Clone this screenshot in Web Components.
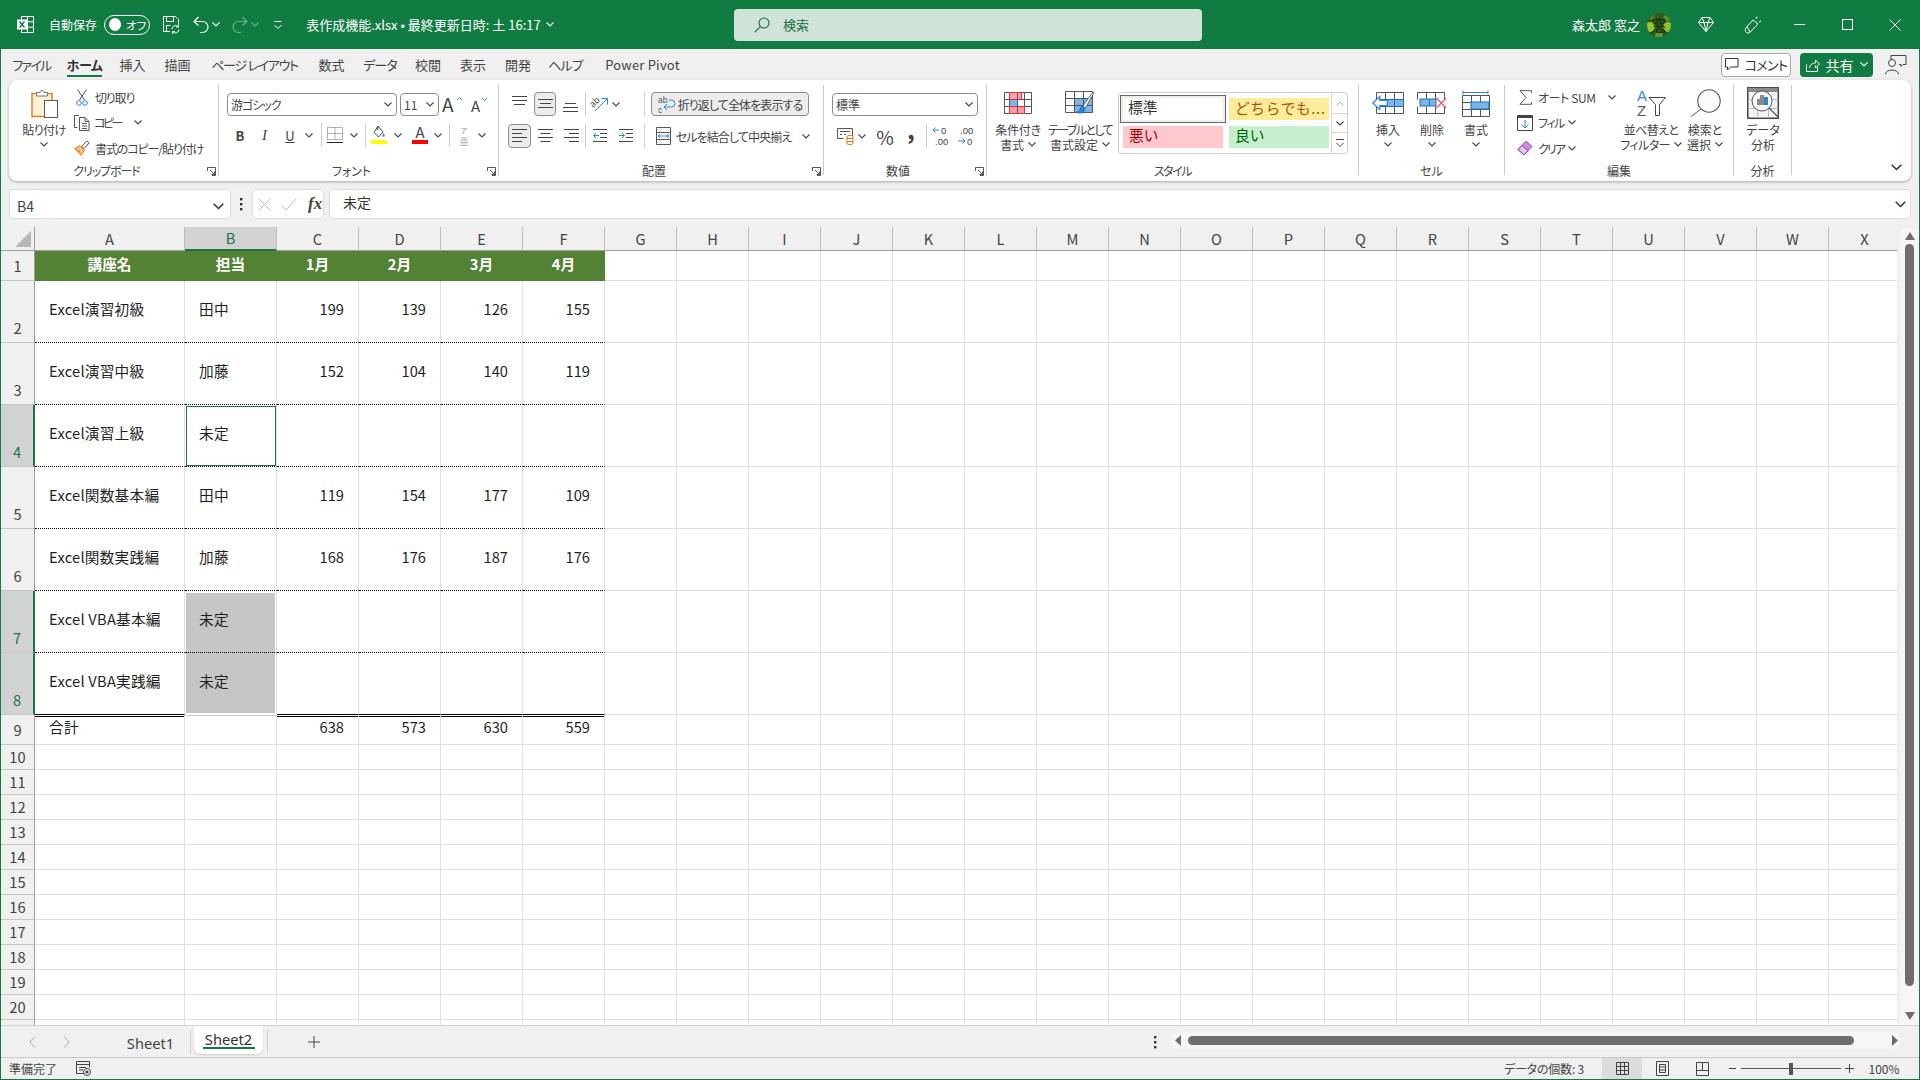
<!DOCTYPE html>
<html lang="ja">
<head>
<meta charset="utf-8">
<title>Excel</title>
<style>
html,body{margin:0;padding:0;height:100%;overflow:hidden}
html{font-family:"Noto Sans CJK JP","Noto Sans",sans-serif;font-feature-settings:"palt";font-size:12px;color:#444}
</style>
</head>
<body>
<x-app>
  <x-titlebar></x-titlebar>
  <x-tabstrip></x-tabstrip>
  <x-ribbon></x-ribbon>
  <x-formula cell="B4" value="未定"></x-formula>
  <x-sheet></x-sheet>
  <x-sheettabs></x-sheettabs>
  <x-status></x-status>
</x-app>
<script>
const B='#2b88d8',G='#555',LS='font-family="Liberation Sans"';
const gridLines=(x,y,w,h,vs,hs,col=G)=>`<path stroke="${col}" d="M${x+.5} ${y+.5}h${w}v${h}h-${w}z ${vs.map(v=>`M${v+.5} ${y}v${h}`).join(' ')} ${hs.map(v=>`M${x} ${v+.5}h${w}`).join(' ')}"/>`;
const ICONS={
 xl:[17,17,`<path stroke="#fff" d="M4.5 .5h12v16h-12z M4.5 5.8h12 M4.5 11.2h12 M10.5 .5v16"/><rect x="0" y="3.5" width="10" height="10" fill="#fff" stroke="none"/><path stroke="#107c41" stroke-width="1.4" d="M2.5 5.5l5 6M7.5 5.5l-5 6"/>`],
 save:[17,18,`<path stroke="#fff" d="M7 15.5H.5V.5h12l3 3v5 M3.5 .5v5h7v-5 M3.5 15.5v-6h4"/><path stroke="#fff" d="M9 13a3.6 3.6 0 0 1 6.3-2.2 M16 13.5a3.6 3.6 0 0 1-6.3 2.2 M15.5 8.5v2.5h-2.5 M9.5 18v-2.5h2.5"/>`],
 undo:[16,18,`<path stroke="#fff" stroke-width="1.2" d="M5.5 1 1 5.5l4.5 4 M1 5.5h8.5a5.5 5.5 0 0 1 0 11H7"/>`],
 redo:[16,18,`<path stroke="#fff" stroke-opacity=".4" stroke-width="1.2" d="M10.5 1 15 5.5l-4.5 4 M15 5.5H6.5a5.5 5.5 0 0 0 0 11H9"/>`],
 chev:[8,5,`<path stroke-width="1.1" d="M.5 .5 4 4l3.5-3.5"/>`],
 chevw:[8,5,`<path stroke="#fff" stroke-width="1.1" d="M.5 .5 4 4l3.5-3.5"/>`],
 chevf:[8,5,`<path stroke="#fff" stroke-opacity=".4" stroke-width="1.1" d="M.5 .5 4 4l3.5-3.5"/>`],
 cust:[8,8,`<path stroke="#fff" d="M.5 .5h7 M.5 4 4 7.5 7.5 4"/>`],
 chevbig:[11,7,`<path stroke="#333" stroke-width="1.5" d="M.7 .7 5.5 5.5 10.3 .7"/>`],
 search:[16,16,`<circle cx="10" cy="6" r="5" stroke="#1c6e42" stroke-width="1.1"/><path stroke="#1c6e42" stroke-width="1.1" d="M6.3 9.7 .7 15.3"/>`],
 avatar:[24,24,`<defs><clipPath id="av"><circle cx="12" cy="12" r="12"/></clipPath></defs><g clip-path="url(#av)" stroke="none"><rect width="24" height="24" fill="#2f5a1c"/><circle cx="3" cy="14" r="5" fill="#9bc437"/><circle cx="21" cy="14" r="5" fill="#8fbb33"/><circle cx="20" cy="5" r="3.5" fill="#5f8f27"/><circle cx="5" cy="4" r="3" fill="#4b7a24"/><circle cx="12" cy="23" r="4" fill="#6a9a2b"/></g><text x="12" y="18" text-anchor="middle" font-size="15" fill="#12300c" stroke="none">窓</text>`],
 gem:[16,15,`<path stroke="#fff" d="M4 .5h8l3.5 5L8 14.5.5 5.5z M.5 5.5h15 M4 .5l2 5 2 9 2-9 2-5"/>`],
 pen:[17,18,`<path stroke="#fff" d="M9 4 14 8 6 16.3C4 18 .8 16.5 1.3 13.6 1.5 12.6 2.2 11.6 3 10.6Z M3 10.6l3.2 5.5 M12 3l1.2-2.4 M15 6l2-1"/>`],
 min:[11,1,`<path stroke="#fff" d="M0 .5h11"/>`],
 max:[11,11,`<rect x=".5" y=".5" width="10" height="10" stroke="#fff"/>`],
 close:[12,12,`<path stroke="#fff" d="M.5 .5l11 11M11.5 .5l-11 11"/>`],
 cmt:[14,13,`<path stroke="#333" d="M.5 .5h12.5v8.5H5.5l-3 3v-3h-2z"/>`],
 share:[14,14,`<path stroke="#fff" d="M.5 6.5v7h11V9 M3.5 10c0-3 3-5 6-5V2l4 4-4 4V7.5"/>`],
 person:[22,20,`<circle cx="7" cy="8" r="3.5" stroke="#444"/><path stroke="#444" d="M.5 19.5c0-6 13-6 13 0"/><path stroke="#444" d="M6 5V.5h15v9h-3l-2 2v-2h-2"/>`],
 paste:[27,29,`<rect x="1" y="4.5" width="20" height="23" fill="#fdf0d8" stroke="#d98324" stroke-width="1.5"/><path fill="#fff" stroke="#777" d="M5.5 7V3.5h3.5a2 2 0 0 1 4 0H16.5V7z"/><rect x="13.5" y="11.5" width="13" height="17" fill="#fff" stroke="#555"/>`],
 cut:[12,17,`<path stroke="#555" d="M1.5 .5 8.5 11 M10.5 .5 3.5 11"/><circle cx="3" cy="14" r="2.3" stroke="${B}"/><circle cx="9" cy="14" r="2.3" stroke="${B}"/>`],
 copy:[16,16,`<path stroke="#555" d="M5 .5H.5v12h3 M5.5 2.5h5.5l4 4v9h-9.5z M8 8.5h5M8 11h5M8 13.5h5 M11 2.5v4h4"/>`],
 brush:[16,16,`<path fill="#fbc27f" stroke="#e07b18" d="M.7 8.5 7 15.3 10.5 10 6 5.5z M3.5 9.5l3 3"/><path fill="#fff" stroke="#555" d="M7.5 6.5 13 .8 15.2 3 10 8.5z"/>`],
 launch:[9,9,`<path stroke="#555" d="M.5 4V.5h8v8H5 M3 3l4.5 4.5 M7.5 4.5v3h-3"/>`],
 ainc:[22,20,`<text x="0" y="17" font-size="19" fill="#444" stroke="none">A</text><path stroke="${B}" d="M15 5l2.5-2.5L20 5"/>`],
 adec:[20,20,`<text x="1" y="17" font-size="15" fill="#444" stroke="none">A</text><path stroke="${B}" d="M12 3l2.5 2.5L17 3"/>`],
 bord:[16,16,`<path stroke="#666" stroke-dasharray="1 1" d="M.5 .5h15v12H.5z M.5 6.5h15 M8 .5v12"/><path stroke="#222" d="M0 15.5h16"/>`],
 fill:[16,20,`<path stroke="#444" d="M7 1 12 7 7.5 12 3 7.5z M7 1l-.5 4"/><path fill="${B}" stroke="none" d="M12.5 8c1 1.5 1.5 2.5 1 3.5-.7.7-2 .4-2-1z"/><rect y="15" width="16" height="4" fill="#ffff00" stroke="none"/>`],
 fcol:[16,20,`<text x="8" y="13" text-anchor="middle" font-size="15" fill="#444" stroke="none">A</text><rect y="15" width="16" height="4" fill="#ff0000" stroke="none"/>`],
 phon:[14,20,`<text x="7" y="7.5" text-anchor="middle" font-size="6.5" fill="#888" stroke="none">ア</text><text x="7" y="19.5" text-anchor="middle" font-size="9" fill="#aaa" stroke="none">亜</text>`],
 at:[15,24,`<path stroke="#444" d="M0 4.5h15M0 8.5h15M2 12.5h11"/>`],
 am:[15,22,`<path stroke="#444" d="M0 6.5h15M2 10.5h11M0 14.5h15"/>`],
 ab:[15,24,`<path stroke="#444" d="M2 11.5h11M0 15.5h15M0 19.5h15"/>`],
 hl:[15,20,`<path stroke="#444" d="M0 3.5h15M0 7.5h10M0 11.5h15M0 15.5h10"/>`],
 hc:[15,20,`<path stroke="#444" d="M0 3.5h15M2.5 7.5h10M0 11.5h15M2.5 15.5h10"/>`],
 hr:[15,20,`<path stroke="#444" d="M0 3.5h15M5 7.5h10M0 11.5h15M5 15.5h10"/>`],
 orient:[17,17,`<text transform="translate(1,12) rotate(-45)" font-size="9" fill="#555" stroke="none">ab</text><path stroke="${B}" d="M3 15 15 3 M9.5 2.5H15.5V8.5"/>`],
 indl:[14,14,`<path stroke="#444" d="M0 .5h14M7 4.5h7M7 8.5h7M0 12.5h14"/><path stroke="${B}" d="M6 6.5H.8 M3 4 .5 6.5 3 9"/>`],
 indr:[14,14,`<path stroke="#444" d="M0 .5h14M7 4.5h7M7 8.5h7M0 12.5h14"/><path stroke="${B}" d="M0 6.5h5.2 M3 4l2.5 2.5L3 9"/>`],
 wrap:[16,18,`<text x="0" y="8" font-size="8.5" ${LS} fill="#555" stroke="none">ab</text><text x="0" y="17.5" font-size="8.5" ${LS} fill="#555" stroke="none">c</text><path stroke="${B}" d="M11 5h2.5a2.5 2.5 0 0 1 0 7H6 M9 9l-3 3 3 3"/>`],
 merge:[15,18,`<path stroke="#555" d="M.5 .5h14v17H.5z M.5 5.5h14 M.5 12.5h14"/><rect x="1" y="6" width="13" height="6" fill="#fff" stroke="none"/><path stroke="${B}" d="M2 9h11 M4 7 2 9l2 2 M11 7l2 2-2 2"/>`],
 acc:[17,17,`<path stroke="#555" d="M.5 .5h15v10h-6 M.5 .5v10h6 M3 3.5h10M3 6.5h2M7 6.5h2"/><rect x="10" y="7.5" width="6" height="9" rx="1.5" fill="#fff" stroke="#e07b18"/><path stroke="#e07b18" d="M10 10.5h6M10 13.5h6"/>`],
 dinc:[17,22,`<text x="9" y="8.5" font-size="9.5" ${LS} fill="#444" stroke="none">0</text><text x="3" y="20" font-size="9.5" ${LS} fill="#444" stroke="none">.00</text><path stroke="${B}" d="M7 5H1 M3.5 2.5 1 5l2.5 2.5"/>`],
 ddec:[17,22,`<text x="3" y="8.5" font-size="9.5" ${LS} fill="#444" stroke="none">.00</text><text x="10" y="20" font-size="9.5" ${LS} fill="#444" stroke="none">0</text><path stroke="${B}" d="M1 16h7 M5.5 13.5 8 16l-2.5 2.5"/>`],
 cf:[28,22,`<rect x="5" y="0" width="12" height="7" fill="#ff9ea6" stroke="none"/><rect x="5" y="7.5" width="8" height="7" fill="#7cb6e8" stroke="none"/><rect x="5" y="15" width="15" height="6.5" fill="#ff9ea6" stroke="none"/>${gridLines(0,0,27,21,[5,13,20],[7,14])}<path stroke="#e0343c" d="M5.5 .5h12v7h-12z M5.5 14.5h15v7h-15z"/><path stroke="#1a6fb8" d="M13.5 7.5v7"/>`],
 tbl:[30,25,`<rect x="9" y="7" width="18" height="14" fill="#7cb6e8" stroke="none"/>${gridLines(0,0,27,21,[9,18],[7,14])}<path fill="#fff" stroke="#666" d="M29 1.5 28 .8 18 15l2.5 2z"/><path fill="${B}" stroke="#1a6fb8" d="M17.5 15c-2 .5-2 3-3 4.5-.5 1-2 1.5-3 1.5 3 2 7 1.5 8.5-3.5z"/>`],
 ins:[32,22,`${gridLines(4,0,27,21,[13,22],[7,14])}<rect x="10" y="7" width="21" height="7" fill="#7cb6e8" stroke="none"/><path stroke="#1a6fb8" fill="none" d="M10.5 7.5h21v7h-21 M22.5 7.5v7"/><path fill="#fff" stroke="${B}" stroke-width="1.2" d="M.8 11l7-6.5v4h7.5v5H7.8v4z"/>`],
 del:[31,22,`<path stroke="#555" d="M.5 .5h27v6.5M.5 .5v7 M.5 14.5v7h27v-7 M9.5 .5v7 M18.5 .5v7 M9.5 14.5v7 M18.5 14.5v7"/><rect x="3" y="7" width="16" height="7" fill="#7cb6e8" stroke="#1a6fb8"/><path stroke="#1a6fb8" d="M12.5 7v7"/><path stroke="#f0505a" stroke-width="1.2" d="M19.5 6 29 16 M29 6 19.5 16"/>`],
 fmt:[28,27,`<path stroke="${B}" d="M1 .5v4M26 .5v4M1 2.5h25"/>${gridLines(0,5,27,21,[9,18],[12,19])}<rect x="9" y="12" width="18" height="7" fill="#7cb6e8" stroke="#1a6fb8"/>`],
 sum:[13,15,`<path stroke="#555" d="M12.5 3V.7H1L7 7.5 1 14.3h11.5V12"/>`],
 fillb:[16,16,`<path stroke="#444" d="M.5 .5h15v15H.5z"/><path stroke="#444" stroke-width="2" d="M0 2h16"/><path stroke="${B}" d="M8 5v8 M4.5 9.5 8 13l3.5-3.5"/>`],
 clear:[16,16,`<path fill="#c68fd6" stroke="#8e44ad" d="M.9 9.5 9 1.2l6 5.3-8 8.4z"/><path fill="#fff" stroke="#8e44ad" d="M5 5.5l6 5.3-4 4.1-6-5.4z" fill-opacity=".5"/>`],
 sort:[29,28,`<text x="0" y="12" font-size="15" ${LS} fill="${B}" stroke="none">A</text><text x="0" y="27" font-size="15" ${LS} fill="#555" stroke="none">Z</text><path stroke="#444" d="M12 8.5h16.5l-6 7v11h-4v-11z"/>`],
 find:[31,28,`<circle cx="19" cy="12" r="11.2" fill="#fbfbfb" stroke="#555" stroke-width="1.1"/><path stroke="#555" d="M11 20 1 27.5"/>`],
 ana:[33,32,`<rect x=".8" y=".8" width="30.5" height="30.5" fill="#f4f4f4" stroke="#444" stroke-width="1.5"/><rect x="1" y="1" width="30" height="4" fill="#8a8a8a" stroke="none"/><path stroke="#bbb" d="M1 12.5h30M1 21.5h30M10.5 5v26M21.5 5v26"/><circle cx="15" cy="14" r="10" fill="#fbfbfb" stroke="#555"/><rect x="10" y="12" width="3" height="6" fill="#8a8a8a" stroke="none"/><rect x="13" y="8" width="4" height="10" fill="#8a8a8a" stroke="none"/><rect x="17" y="10" width="4" height="8" fill="${B}" stroke="none"/><path stroke="#555" stroke-width="1.2" d="M22 21l10 10"/>`],
 dots:[3,14,`<g fill="#333" stroke="none"><rect x="0" y="1" width="2.4" height="2.4"/><rect x="0" y="6" width="2.4" height="2.4"/><rect x="0" y="11" width="2.4" height="2.4"/></g>`],
 x:[13,13,`<path stroke="#bdbdbd" d="M.5 .5l12 12M12.5 .5l-12 12"/>`],
 chk:[16,13,`<path stroke="#bdbdbd" d="M.5 7 5 12 15.5 .5"/>`],
 corner:[16,16,`<path fill="#b8b8b8" stroke="none" d="M16 0v16H0z"/>`],
 up:[10,8,`<path fill="#6e6e6e" stroke="none" d="M5 0l5 8H0z"/>`],
 down:[10,8,`<path fill="#6e6e6e" stroke="none" d="M5 8 0 0h10z"/>`],
 left:[6,11,`<path fill="#6e6e6e" stroke="none" d="M0 5.5 6 0v11z"/>`],
 right:[6,11,`<path fill="#6e6e6e" stroke="none" d="M6 5.5 0 0v11z"/>`],
 navl:[7,12,`<path stroke="#a8a8a8" d="M6 .5.8 6 6 11.5"/>`],
 navr:[7,12,`<path stroke="#a8a8a8" d="M1 .5 6.2 6 1 11.5"/>`],
 plus:[12,12,`<path stroke="#444" d="M6 0v12M0 6h12"/>`],
 macro:[15,15,`<path stroke="#444" d="M8 12.5H.5V.5h13v6 M.5 3.5h13 M3 6.5h7M3 9h4"/><circle cx="11" cy="11" r="3.5" stroke="#444"/><circle cx="11" cy="11" r="1.6" fill="#444" stroke="none"/>`],
 vnorm:[13,13,`<path stroke="#444" d="M.5 .5h12v12H.5z M.5 4.5h12M.5 8.5h12M4.5 .5v12M8.5 .5v12"/>`],
 vpage:[13,15,`<path stroke="#444" d="M.5 .5h12v14H.5z M3.5 3.5h6v8h-6z M3.5 6h6M3.5 9h6"/>`],
 vbrk:[13,14,`<path stroke="#444" d="M.5 .5h12v13H.5z M6.5 .5v8 M.5 8.5h12"/>`],
 amin:[7,1,`<path stroke="#444" d="M0 .5h7"/>`],
 aplus:[9,9,`<path stroke="#444" d="M4.5 0v9M0 4.5h9"/>`]
};
const ic=n=>`<x-ic name="${n}"></x-ic>`;
const it=(x,w,h)=>({x,w,h});
const c=(cx,w,h)=>({x:cx-w/2,w,h});
const flow=(x0,items)=>{let p=x0;return items.map(i=>{const m=i.x-p;p=i.x+i.w;return `<span class="it" style="margin-left:${m}px;width:${i.w}px">${i.h}</span>`}).join('')};
const IT=`.it{display:flex;flex:none;align-items:center;justify-content:center;white-space:nowrap;height:100%}`;
class Shadow extends HTMLElement{
  constructor(){super();this.attachShadow({mode:'open'})}
  connectedCallback(){this.shadowRoot.innerHTML=this.render()}
  attr(n,d=''){return this.hasAttribute(n)?this.getAttribute(n):d}
}
customElements.define('x-ic',class extends Shadow{render(){
  const [w,h,m]=ICONS[this.attr('name')];
  return `<style>:host{display:inline-flex;flex:none;line-height:0}svg{display:block;overflow:visible}</style><svg width="${w}" height="${h}" viewBox="0 0 ${w} ${h}" fill="none" stroke="currentColor">${m}</svg>`;
}});
customElements.define('x-app',class extends Shadow{render(){
  return `<style>:host{display:flex;flex-direction:column;box-sizing:border-box;width:1920px;height:1080px;background:#107c41;padding:0 1px 1px;overflow:hidden}</style><slot></slot>`;
}});
customElements.define('x-toggle',class extends Shadow{render(){
  return `<style>:host{display:flex;align-items:center;box-sizing:border-box;width:46px;height:20px;border:1px solid #fff;border-radius:10px;color:#fff;font-size:11.5px;padding-left:4px;gap:5px}i{display:block;width:12px;height:13px;border-radius:50%;background:#fff}</style><i></i><span>オフ</span>`;
}});
customElements.define('x-search',class extends Shadow{render(){
  return `<style>:host{display:flex;align-items:center;box-sizing:border-box;width:468px;height:32px;background:#cfe3d8;border-radius:4px;padding-left:20px;color:#1c6e42;font-size:13px}span{margin-left:13px}</style>${ic('search')}<span>検索</span>`;
}});
customElements.define('x-titlebar',class extends Shadow{render(){
  const t=s=>`<span>${s}</span>`;
  return `<style>:host{display:flex;align-items:center;height:49px;flex:none;background:#107c41;color:#fff;font-size:12px}${IT}</style>`+flow(1,[
   c(25,17,ic('xl')),it(49,48,t('自動保存')),it(104,46,'<x-toggle></x-toggle>'),c(171.5,17,ic('save')),c(200.5,16,ic('undo')),c(216,8,ic('chevw')),c(239.5,16,ic('redo')),c(255,8,ic('chevf')),c(277.5,8,ic('cust')),
   it(307,233,`<span style="font-size:13px">表作成機能.xlsx • 最終更新日時: 土 16:17</span>`),c(550,8,ic('chevw')),
   it(734,468,'<x-search></x-search>'),
   it(1574,64,`<span style="font-size:13px">森太郎 窓之</span>`),c(1659,24,ic('avatar')),c(1706,16,ic('gem')),c(1752,17,ic('pen')),c(1799,11,ic('min')),c(1847,11,ic('max')),c(1895,12,ic('close'))
  ]);
}});
customElements.define('x-btn',class extends Shadow{render(){
  const g=this.hasAttribute('green');
  return `<style>:host{display:flex;align-items:center;justify-content:center;box-sizing:border-box;width:100%;height:24px;border-radius:4px;gap:6px;font-size:${g?14:13}px;${g?'background:#107c41;color:#fff;':'background:#fff;color:#333;border:1px solid #a8a8a8;'}}</style><slot></slot>`;
}});
customElements.define('x-tabstrip',class extends Shadow{render(){
  const T=(x,w,s,ls=0)=>it(x,w,`<span class="t" style="letter-spacing:${ls}px">${s}</span>`);
  return `<style>:host{display:flex;align-items:center;height:31px;flex:none;background:#f0f0f0;font-size:13px;color:#444}${IT}.t{line-height:31px}.on{font-weight:700;color:#333;height:100%;display:flex;align-items:center;position:relative;padding-bottom:1px;letter-spacing:-.4px}.on::after{content:"";position:absolute;left:0;right:0;top:26px;height:2px;background:#107c41}</style>`+flow(1,[
   T(13,37,'ファイル',-1.6),it(68,33,`<span class="on">ホーム</span>`),T(120,25,'挿入'),T(165,25,'描画'),T(211,87,'ページ レイアウト',-1.3),T(319,25,'数式'),T(364,32,'データ',-.8),T(415,26,'校閲'),T(460,26,'表示'),T(505,26,'開発'),T(549,33,'ヘルプ',-.8),T(605,75,'Power Pivot',.2),
   it(1721,70,`<x-btn>${ic('cmt')}<span style="letter-spacing:-.6px">コメント</span></x-btn>`),
   it(1800,73,`<x-btn green>${ic('share')}<span>共有</span>${ic('chevw')}</x-btn>`),
   c(1896,22,ic('person'))
  ]);
}});
customElements.define('x-rgroup',class extends Shadow{render(){
  const l=this.hasAttribute('launcher');
  return `<style>:host{display:flex;flex-direction:column;flex:none;box-sizing:border-box;height:90px;border-right:1px solid #c9c9c9;width:${this.attr('w')}px}
  .body{height:78px;flex:none}.foot{display:flex;height:12px;line-height:16px;font-size:12px;color:#444}.lab{flex:1;text-align:center;white-space:nowrap;letter-spacing:${this.attr('ls','0')}px}.lau{width:14px;display:flex;justify-content:center;padding-top:4px}</style>
  <div class="body"><slot></slot></div><div class="foot"><span class="lab">${this.attr('label')}</span>${l?`<span class="lau">${ic('launch')}</span>`:''}</div>`;
}});
customElements.define('x-big',class extends Shadow{render(){
  const L=this.attr('lines').split('|'),ch=this.attr('chev');
  const ls=L.map((s,i)=>`<div class="ln">${s}${ch==='inline'&&i===L.length-1?`<span class="c">${ic('chev')}</span>`:''}</div>`).join('');
  return `<style>:host{display:flex;flex-direction:column;align-items:center;width:100%;font-size:12px;color:#444;height:78px}.icon{height:36.5px;display:flex;align-items:center;justify-content:center;flex:none}.ln{height:15px;line-height:15px;white-space:nowrap;display:flex;align-items:center;justify-content:center;letter-spacing:${this.attr('ls','0')}px}.c{margin-left:4px;display:flex}</style><div class="icon">${ic(this.attr('icon'))}</div>${ls}${ch==='below'?`<div class="ln">${ic('chev')}</div>`:''}`;
}});
customElements.define('x-small',class extends Shadow{render(){
  const cg=this.attr('chevgap');
  return `<style>:host{display:flex;align-items:center;height:25.5px;font-size:12px;color:#444;white-space:nowrap}.i{width:18px;display:flex;justify-content:center;flex:none}.t{margin-left:${this.attr('lg','4')}px;letter-spacing:${this.attr('ls','0')}px}.c{display:flex;margin-left:${cg}px}</style><span class="i">${ic(this.attr('icon'))}</span><span class="t">${this.attr('label')}</span>${cg?`<span class="c">${ic('chev')}</span>`:''}`;
}});
customElements.define('x-select',class extends Shadow{render(){
  return `<style>:host{display:flex;align-items:center;justify-content:space-between;box-sizing:border-box;width:100%;height:23px;border:1px solid #8c8c8c;border-radius:4px;background:#fff;padding:0 4px 0 3px;font-size:12px;color:#444}span{letter-spacing:${this.attr('ls','0')}px}</style><span>${this.attr('text')}</span>${ic('chev')}`;
}});
customElements.define('x-tool',class extends Shadow{render(){
  return `<style>:host{display:flex;align-items:center;justify-content:center;box-sizing:border-box;width:100%;height:100%;color:#444;font-size:12px;gap:3px}:host([on]){background:#ececec;border:1px solid #8c8c8c;border-radius:4px}</style><slot></slot>`;
}});
customElements.define('x-vsep',class extends Shadow{render(){
  return `<style>:host{display:block;width:1px;height:24px;background:#cfcfcf}</style>`;
}});
customElements.define('x-gallery',class extends Shadow{render(){
  return `<style>:host{display:flex;box-sizing:border-box;width:230px;height:62px;border:1px solid #cdcdcd;border-radius:4px;font-feature-settings:normal;background:#fff}
  .cells{display:grid;grid-template-columns:106px 100px;grid-template-rows:28px 22px;gap:3px;padding:2px 0 0 1px}
  .c{box-sizing:border-box;font-size:14.67px;line-height:16px;white-space:nowrap;display:flex;align-items:center;padding-left:6px}
  .n{border:1px solid #666;box-shadow:inset 0 0 0 2px #eee;padding:0 0 4px 7px;color:#333}
  .g{align-self:center;height:22px;background:#ffeb9c;color:#9c5700;letter-spacing:.7px;padding-bottom:3px}
  .b{background:#ffc7ce;color:#9c0006;margin-left:3px;width:100px;padding-bottom:5px}.o{background:#c6efce;color:#006100;padding-bottom:5px}
  .s{margin-left:auto;width:15px;display:grid;grid-template-rows:21px 19px 1fr;border-left:1px solid #d4d4d4}
  .s span{display:flex;align-items:center;justify-content:center;border-bottom:1px solid #d4d4d4;color:#444}.s span:last-child{border:0}.s .dis{color:#b8b8b8}</style>
  <div class="cells"><div class="c n">標準</div><div class="c g">どちらでも...</div><div class="c b">悪い</div><div class="c o">良い</div></div>
  <div class="s"><span class="dis"><svg width="8" height="5" fill="none" stroke="currentColor"><path d="M.5 4.5 4 1l3.5 3.5"/></svg></span><span>${ic('chev')}</span><span><svg width="8" height="9" fill="none" stroke="currentColor"><path d="M0 .5h8M.5 4 4 7.5 7.5 4"/></svg></span></div>`;
}});
customElements.define('x-ribbon',class extends Shadow{render(){
  const tool=(inner,on)=>`<x-tool${on?' on':''}>${inner}</x-tool>`;
  const sep=x=>it(x,1,'<x-vsep></x-vsep>');
  const ch=cx=>c(cx,10,tool(ic('chev')));
  const big=(cx,w,icon,lines,chev,ls)=>c(cx,w,`<x-big icon="${icon}" lines="${lines}" chev="${chev||''}" ls="${ls||0}"></x-big>`);
  const txt=(s,st)=>`<span style="${st||''}">${s}</span>`;
  const R=(h,mt,x0,items)=>`<div class="r" style="height:${h}px;margin-top:${mt}px">${flow(x0,items)}</div>`;
  return `<style>:host{display:block;flex:none;height:101px;padding:0 8px;background:#f0f0f0;position:relative;z-index:1}
  .panel{display:flex;box-sizing:border-box;height:101px;padding:5px 0 6px;background:#fff;border-radius:8px;box-shadow:0 1px 3px rgba(0,0,0,.3)}
  ${IT}.r{display:flex;align-items:center}.body{display:flex;align-items:flex-start;height:78px}.col{display:flex;flex-direction:column;margin-top:-3px;width:100%}
  .end{flex:1;display:flex;align-items:flex-end;justify-content:flex-end;padding:0 9px 4px 0}</style>
  <div class="panel">
  <x-rgroup w="210" label="クリップボード" ls="-1.1" launcher>
    <div class="body">${flow(9,[big(44,52,'paste','貼り付け','below',-.5),it(73,135,`<div class="col"><x-small icon="cut" label="切り取り" ls="-1.2"></x-small><x-small icon="copy" label="コピー" lg="3" chevgap="13" ls="-2.5"></x-small><x-small icon="brush" label="書式のコピー/貼り付け" ls="-1.1"></x-small></div>`)])}</div>
  </x-rgroup>
  <x-rgroup w="280" label="フォント" launcher>
    <div style="height:8px"></div>
    ${R(23,0,219,[it(227,170,'<x-select text="游ゴシック" ls="-1"></x-select>'),it(400,39,'<x-select text="11"></x-select>'),it(440,26,tool(ic('ainc'))),it(467,26,tool(ic('adec')))])}
    ${R(24,7,219,[c(240,24,tool(txt('B','font-weight:700;font-size:13px'))),c(264.5,24,tool(txt('I','font-family:Liberation Serif,serif;font-style:italic;font-size:15px'))),c(290,24,tool(txt('U','text-decoration:underline;font-size:13px'))),ch(309),sep(321),c(334.5,16,tool(ic('bord'))),ch(353.5),sep(364.5),c(379,16,tool(ic('fill'))),ch(397.5),c(420,16,tool(ic('fcol'))),ch(438),sep(449),c(464,14,tool(ic('phon'))),ch(482)])}
  </x-rgroup>
  <x-rgroup w="325" label="配置" launcher>
    <div style="height:7px"></div>
    ${R(24,0,499,[c(519,20,tool(ic('at'))),it(534,22,tool(ic('am'),1)),c(570.5,20,tool(ic('ab'))),sep(585),c(600,17,tool(ic('orient'))),ch(616),sep(644),it(651,158,tool(`${ic('wrap')}<span style="margin-left:1px;letter-spacing:-.9px">折り返して全体を表示する</span>`,1))])}
    ${R(24,8,499,[it(508,23,tool(ic('hl'),1)),c(545,20,tool(ic('hc'))),c(571,20,tool(ic('hr'))),sep(585),c(600,20,tool(ic('indl'))),c(626,20,tool(ic('indr'))),sep(644),c(663,15,tool(ic('merge'))),it(675.5,116,txt('セルを結合して中央揃え','letter-spacing:-.9px')),ch(806)])}
  </x-rgroup>
  <x-rgroup w="163" label="数値" launcher>
    <div style="height:8px"></div>
    ${R(23,0,824,[it(832,146,'<x-select text="標準"></x-select>')])}
    ${R(24,8,824,[c(845,17,tool(ic('acc'))),ch(862),c(885,24,tool(txt('%','font-size:19px'))),c(911,16,tool(txt(',','font-size:24px;font-weight:700;line-height:18px;margin-top:-14px'))),sep(926),c(940,17,tool(ic('dinc'))),c(965,17,tool(ic('ddec')))])}
  </x-rgroup>
  <x-rgroup w="372" label="スタイル" ls="-1.4">
    <div class="body">${flow(987,[big(1018,58,'cf','条件付き|書式','inline',-.3),big(1080,64,'tbl',"<span style='letter-spacing:-1.6px'>テーブルとして</span>|書式設定",'inline')])}<span style="margin:7px 0 0 ${1118-1112}px"><x-gallery></x-gallery></span></div>
  </x-rgroup>
  <x-rgroup w="146" label="セル">
    <div class="body">${flow(1359,[big(1388,40,'ins','挿入','below'),big(1432,40,'del','削除','below'),big(1476,40,'fmt','書式','below')])}</div>
  </x-rgroup>
  <x-rgroup w="229" label="編集">
    <div class="body">${flow(1505,[it(1516,90,`<div class="col"><x-small icon="sum" label="オート SUM" chevgap="12" ls="-.4"></x-small><x-small icon="fillb" label="フィル" chevgap="4" ls="-1.5"></x-small><x-small icon="clear" label="クリア" chevgap="4" ls="-1.8"></x-small></div>`),big(1651,58,'sort','並べ替えと|フィルター','inline',-.6),big(1705,48,'find','検索と|選択','inline')])}</div>
  </x-rgroup>
  <x-rgroup w="58" label="分析">
    <div class="body">${flow(1734,[big(1763,50,'ana','データ|分析')])}</div>
  </x-rgroup>
  <div class="end">${ic('chevbig')}</div>
  </div>`;
}});
customElements.define('x-formula',class extends Shadow{render(){
  return `<style>:host{display:flex;align-items:stretch;flex:none;height:38px;box-sizing:border-box;background:#f0f0f0;padding:8px 8px 0;font-size:14px;color:#444}
  .box{background:#fff;border:1px solid #dcdcdc;border-radius:4px;box-sizing:border-box;display:flex;align-items:center}
  .name{width:222px;padding:4px 6px 0 7px;justify-content:space-between}.dots{width:21px;display:flex;align-items:center;justify-content:center}
  .fx{width:72px;gap:0;padding-left:5px}.fx x-ic{margin-right:10px}.fx i{font-family:"Liberation Serif",serif;font-weight:700;font-size:17px;color:#444;margin-left:1px}
  .val{flex:1;margin-left:5px;padding:0 4px 0 13px;justify-content:space-between}.val span{margin-top:-4px;color:#333}</style>
  <div class="box name"><span>${this.attr('cell')}</span>${ic('chevbig')}</div><div class="dots">${ic('dots')}</div>
  <div class="box fx">${ic('x')}${ic('chk')}<i>fx</i></div>
  <div class="box val"><span>${this.attr('value')}</span>${ic('chevbig')}</div>`;
}});
customElements.define('x-sheet',class extends Shadow{render(){
  const cols='ABCDEFGHIJKLMNOPQRSTUVWX'.split('');
  const w=[150,92,82,82,82,82].concat(Array(18).fill(72));
  const rows=[30,62,62,62,62,62,62,62,30].concat(Array(12).fill(25));
  const data={2:['Excel演習初級','田中',199,139,126,155],3:['Excel演習中級','加藤',152,104,140,119],4:['Excel演習上級','未定'],5:['Excel関数基本編','田中',119,154,177,109],6:['Excel関数実践編','加藤',168,176,187,176],7:['Excel VBA基本編','未定'],8:['Excel VBA実践編','未定'],9:['合計','',638,573,630,559]};
  const head=['講座名','担当','1月','2月','3月','4月'];
  let h=`<div class="cn">${ic('corner')}</div>`;
  cols.forEach(k=>h+=`<div class="ch${k==='B'?' sel':''}">${k}</div>`);
  rows.forEach((_,ri)=>{
    const r=ri+1,sel=[4,7,8].includes(r);
    h+=`<div class="rh${sel?' sel':''}${rows[ri]<=25?' mid':''}">${r===21?'':r}</div>`;
    cols.forEach((k,ci)=>{
      let cl='c',t='';
      if(ci<6){
        if(r===1){cl+=' hd';t=head[ci]}
        else{
          const v=(data[r]||[])[ci];
          if(v!==undefined&&v!==''){t=v;cl+=ci>=2?' num':' txt'}
          if(r>=2&&r<=7)cl+=' dot';
          if(r===8&&ci!==1)cl+=' dbl1';
          if(r===9)cl+=ci===1?' b9':' dbl2';
          if(ci===1&&r===4)cl+=' act';
          if(ci===1&&r===7)cl+=' s7';
          if(ci===1&&r===8)cl+=' s8';
        }
      }
      h+=`<div class="${cl}"><span>${t}</span></div>`;
    });
  });
  return `<style>:host{display:flex;flex:1;min-height:0;background:#f0f0f0;padding-top:8px;font-feature-settings:normal}
  .wrap{width:1896px;flex:none;overflow:hidden;background:#fff}
  .g{display:grid;grid-template-columns:34px ${w.map(x=>x+'px').join(' ')};grid-template-rows:24px ${rows.map(x=>x+'px').join(' ')};font-size:14.67px;color:#1f1f1f}
  .cn{background:#f0f0f0;border-right:1px solid #9e9e9e;border-bottom:1px solid #9e9e9e;display:flex;align-items:flex-end;justify-content:flex-end;padding:0 3px 3px 0;box-sizing:border-box}
  .ch{background:#f0f0f0;box-sizing:border-box;border-right:1px solid #bdbdbd;border-bottom:1px solid #9e9e9e;display:flex;align-items:center;justify-content:center;color:#444;padding-bottom:1px}
  .ch.sel{background:#d2d2d2;color:#217346;border-bottom:2px solid #217346}
  .rh{background:#f0f0f0;box-sizing:border-box;border-right:1px solid #9e9e9e;border-bottom:1px solid #c4c4c4;display:flex;align-items:flex-end;justify-content:center;line-height:22px;padding-bottom:3px;color:#444}
  .rh.mid{align-items:center;padding-bottom:0}
  .rh.sel{background:#d2d2d2;color:#217346;border-right:2px solid #217346}
  .c{box-sizing:border-box;border-right:1px solid #e0e0e0;border-bottom:1px solid #e0e0e0;display:flex;align-items:center;white-space:nowrap;overflow:hidden;padding-bottom:5px;line-height:20px}
  .hd{background:#548235;border-color:#548235;color:#fff;font-weight:700;justify-content:center;padding-bottom:3px}
  .txt{padding-left:14px;letter-spacing:.25px}.num{justify-content:flex-end;padding-right:14px}
  .dot{border-bottom:1px dotted #000}
  .dbl1{border-bottom:1px solid #000}
  .dbl2{background:linear-gradient(#000,#000) 0 1px/100% 1px no-repeat}
  .b9{background:linear-gradient(#cfcfcf,#cfcfcf) 0 0/100% 1px no-repeat}
  .act{outline:1px solid #217346;outline-offset:-2px}
  .s7{background:#c6c6c6;box-shadow:inset 1px 2px 0 #fff,inset -1px 0 0 #fff}
  .s8{background:#c6c6c6;box-shadow:inset 1px 0 0 #fff,inset -1px -1px 0 #fff;border-bottom:1px solid #fff}
  .sc{flex:none;width:19px;margin:1px 0 0 3px;background:#f6f6f6;border-radius:8px 8px 0 0;display:flex;flex-direction:column;align-items:center;padding:4px 0 0;box-sizing:border-box}
  .th{width:9px;height:742px;background:#6e6e6e;border-radius:5px;margin-top:4px;margin-left:-1px}.dn{margin-top:auto;margin-bottom:2px}</style>
  <div class="wrap"><div class="g">${h}</div></div>
  <div class="sc">${ic('up')}<div class="th"></div><div class="dn">${ic('down')}</div></div>`;
}});
customElements.define('x-sheettabs',class extends Shadow{render(){
  return `<style>:host{display:flex;flex:none;height:32px;box-sizing:border-box;background:#f0f0f0;border-top:1px solid #d2d2d2;font-family:"Noto Sans",sans-serif;font-size:14.67px;color:#444}${IT}
  .tab{display:flex;width:100%;height:28px;align-self:flex-start;background:#fff;border-radius:0 0 6px 6px;align-items:flex-start;justify-content:center;box-shadow:0 1px 2px rgba(0,0,0,.15)}
  .tab b{font-weight:400;display:block;height:23px;padding:0 2px;line-height:26px;width:52px;text-align:center;box-sizing:border-box;border-bottom:2px solid #107c41;color:#333}
  .sp{height:24px;width:1px;background:#cfcfcf;align-self:flex-start;margin-top:4px}
  .hs{display:flex;align-items:center;width:100%;height:17px;background:#f6f6f6;border-radius:8px;align-self:flex-start;margin-top:6px}
  .hs i{display:block;width:666px;height:9px;background:#6e6e6e;border-radius:5px;margin-left:7px;margin-right:34px}
  .hs x-ic{margin-left:4px}</style>`+flow(1,[
   c(32,7,ic('navl')),c(66,7,ic('navr')),it(127,47,`<span style="margin-top:3px">Sheet1</span>`),it(190,1,'<span class="sp"></span>'),it(194,69,'<div class="tab"><b>Sheet2</b></div>'),it(267,1,'<span class="sp"></span>'),c(314,12,ic('plus')),c(1155,3,ic('dots')),
   it(1171,729,`<div class="hs">${ic('left')}<i></i>${ic('right')}</div>`)
  ]);
}});
customElements.define('x-status',class extends Shadow{render(){
  return `<style>:host{display:flex;align-items:center;flex:none;height:22px;box-sizing:border-box;background:#f0f0f0;border-top:1px solid #c8c8c8;font-size:12px;color:#444}${IT}
  .on{background:#dcdcdc;display:flex;align-items:center;justify-content:center;width:100%;height:100%}
  .sl{display:flex;align-items:center;width:100%;height:1px;background:#555}.sl i{display:block;width:4px;height:12px;background:#555;margin-left:48px}</style>`+flow(1,[
   it(9,48,'<span>準備完了</span>'),c(83,15,ic('macro')),it(1504,80,'<span style="letter-spacing:-.2px">データの個数: 3</span>'),it(1602,40,`<div class="on">${ic('vnorm')}</div>`),c(1662,13,ic('vpage')),c(1702.5,13,ic('vbrk')),c(1732,7,ic('amin')),it(1741,100,'<div class="sl"><i></i></div>'),c(1849.5,9,ic('aplus')),it(1868,32,'<span>100%</span>')
  ]);
}});
</script>
</body>
</html>
